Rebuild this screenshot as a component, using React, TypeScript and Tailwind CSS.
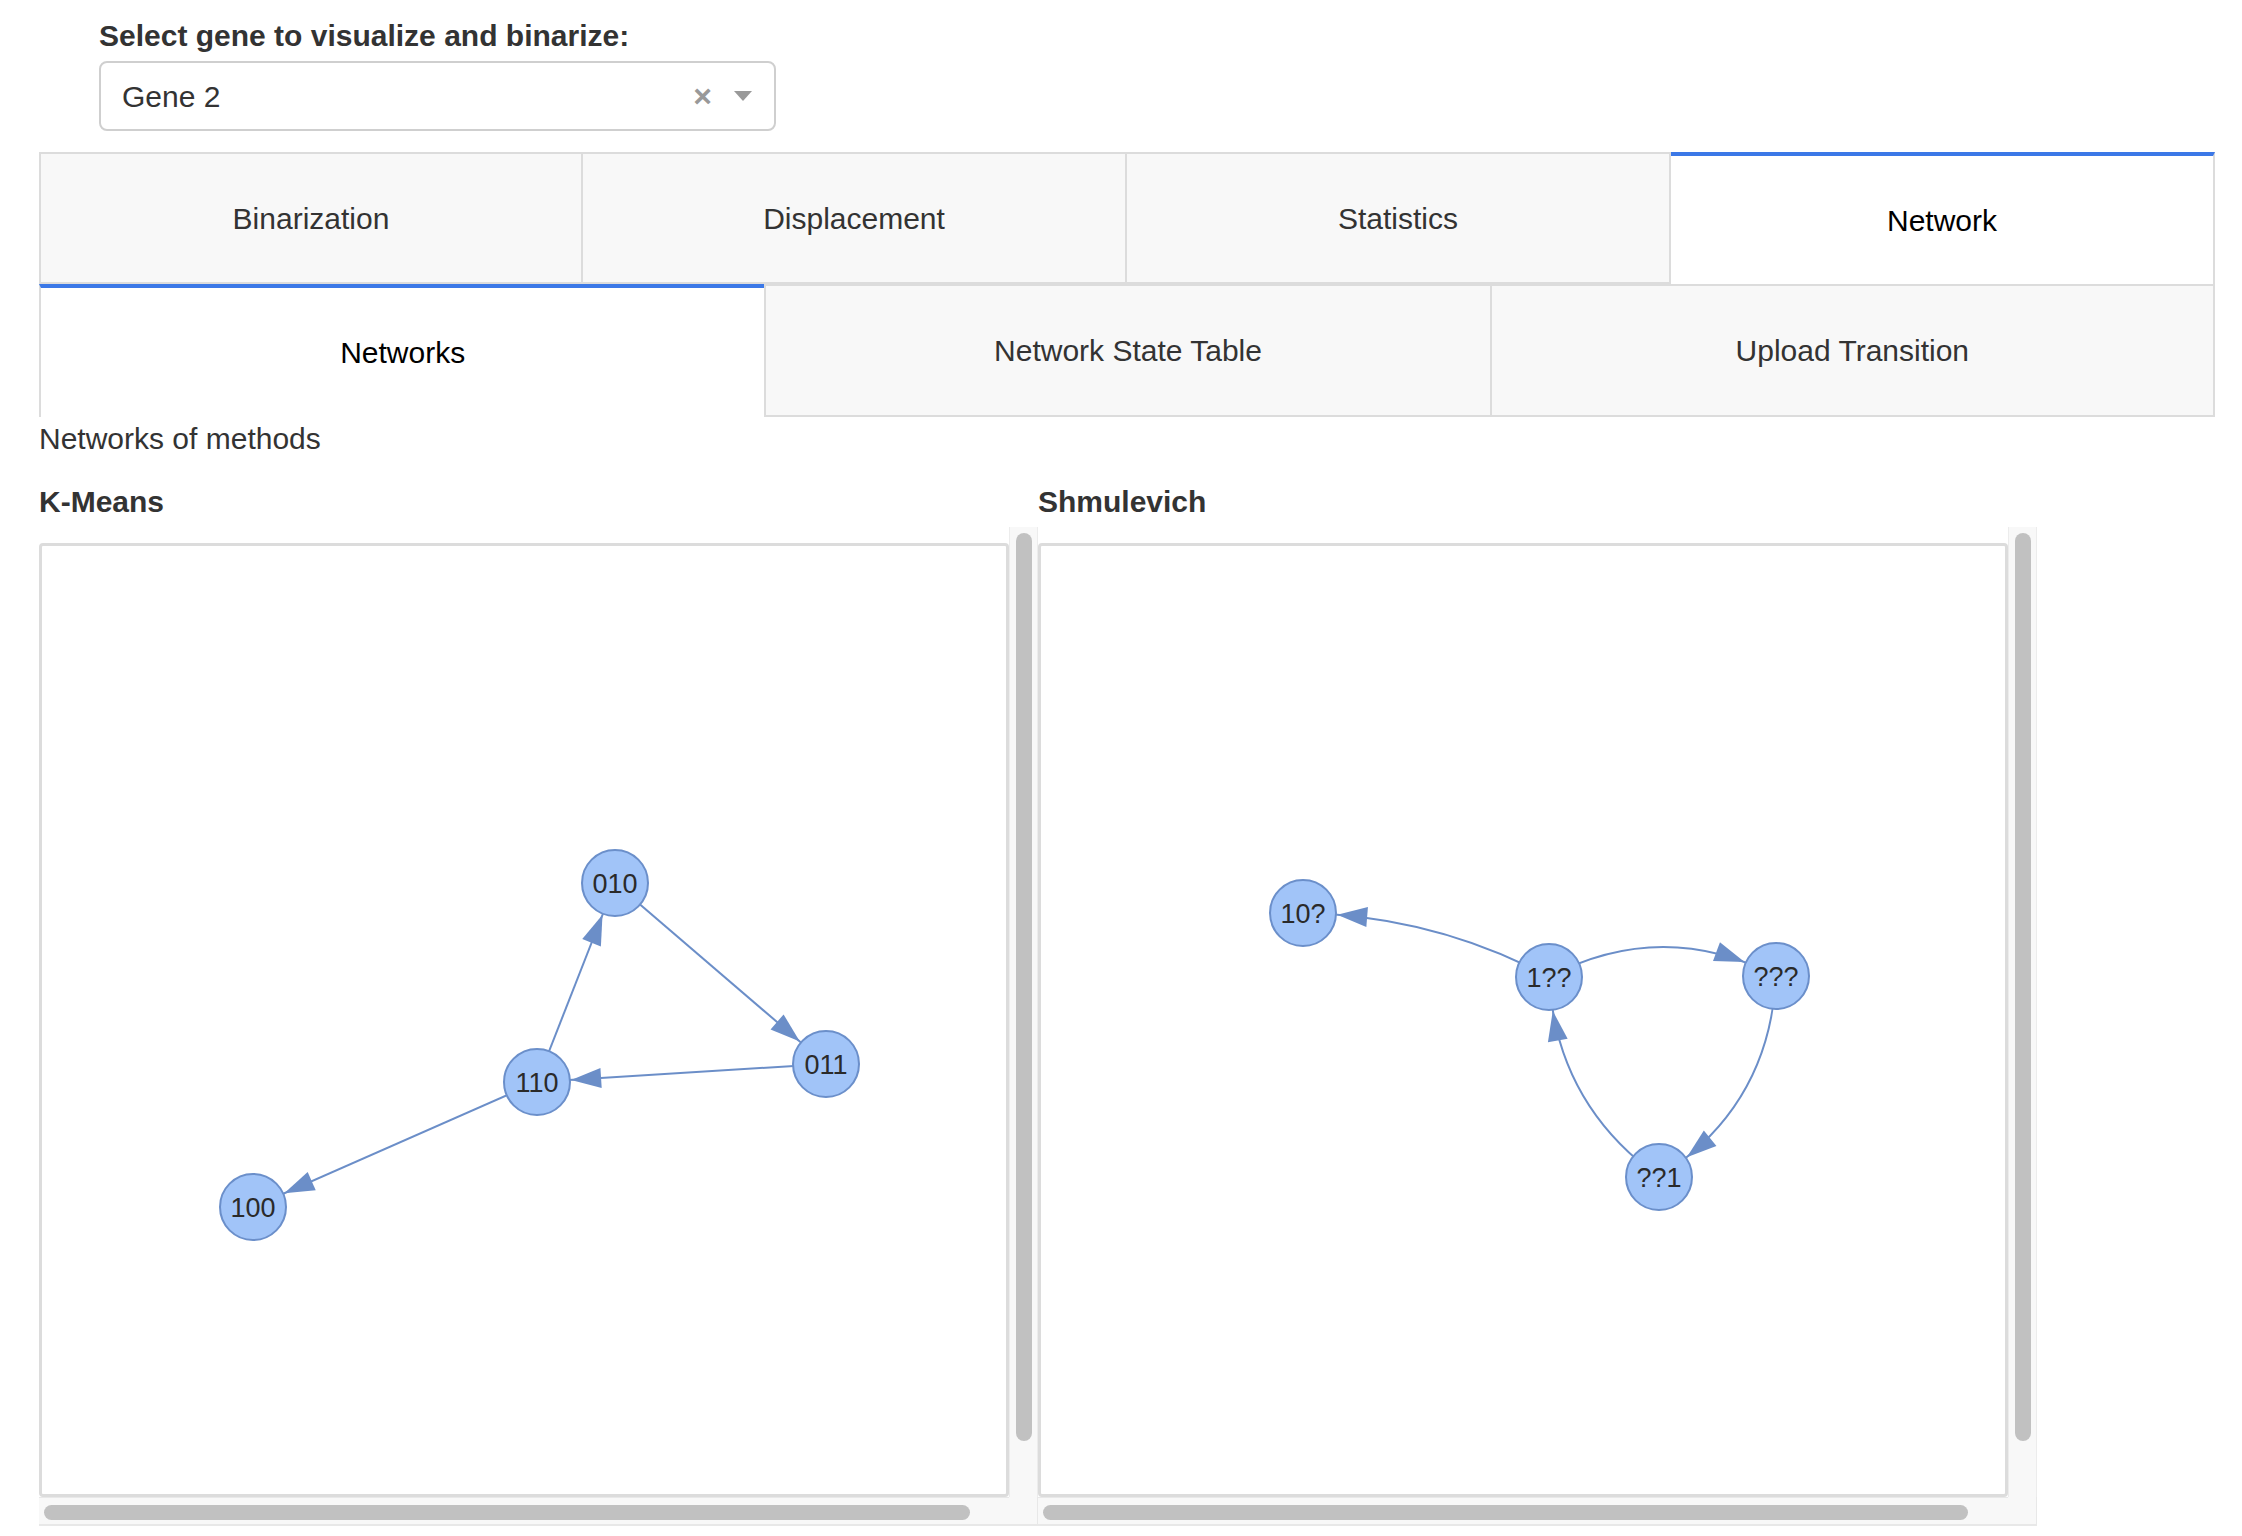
import React from 'react';

type GraphNode = { id: string; x: number; y: number };
type GraphEdge = { from: string; to: string; k: number };

const R = 33;
const EDGE = '#6b8ec8';

const kmeansNodes: GraphNode[] = [
  { id: '010', x: 615, y: 883 },
  { id: '011', x: 826, y: 1064 },
  { id: '110', x: 537, y: 1082 },
  { id: '100', x: 253, y: 1207 },
];
const kmeansEdges: GraphEdge[] = [
  { from: '110', to: '010', k: 0 },
  { from: '010', to: '011', k: 0 },
  { from: '011', to: '110', k: 0 },
  { from: '110', to: '100', k: 0 },
];

const shmuNodes: GraphNode[] = [
  { id: '10?', x: 1303, y: 913 },
  { id: '1??', x: 1549, y: 977 },
  { id: '???', x: 1776, y: 976 },
  { id: '??1', x: 1659, y: 1177 },
];
const shmuEdges: GraphEdge[] = [
  { from: '1??', to: '10?', k: -0.12 },
  { from: '1??', to: '???', k: 0.26 },
  { from: '???', to: '??1', k: 0.26 },
  { from: '??1', to: '1??', k: 0.24 },
];

const Edge = ({ a, b, k }: { a: GraphNode; b: GraphNode; k: number }) => {
  const dx = b.x - a.x;
  const dy = b.y - a.y;
  const c = { x: (a.x + b.x) / 2 + k * dy, y: (a.y + b.y) / 2 - k * dx };
  const bez = (t: number) => ({
    x: (1 - t) * (1 - t) * a.x + 2 * (1 - t) * t * c.x + t * t * b.x,
    y: (1 - t) * (1 - t) * a.y + 2 * (1 - t) * t * c.y + t * t * b.y,
  });
  let t = 1;
  while (t > 0) {
    const p = bez(t);
    if (Math.hypot(p.x - b.x, p.y - b.y) >= R + 1) break;
    t -= 0.002;
  }
  const tip = bez(t);
  const tx = 2 * (1 - t) * (c.x - a.x) + 2 * t * (b.x - c.x);
  const ty = 2 * (1 - t) * (c.y - a.y) + 2 * t * (b.y - c.y);
  const len = Math.hypot(tx, ty);
  const ux = tx / len;
  const uy = ty / len;
  const bx = tip.x - ux * 30;
  const by = tip.y - uy * 30;
  const wing = 10;
  return (
    <g>
      <path d={`M ${a.x} ${a.y} Q ${c.x} ${c.y} ${b.x} ${b.y}`} stroke={EDGE} strokeWidth={2} fill="none" />
      <polygon
        points={`${tip.x},${tip.y} ${bx - uy * wing},${by + ux * wing} ${bx + uy * wing},${by - ux * wing}`}
        fill={EDGE}
      />
    </g>
  );
};

const Graph = ({ nodes, edges, x0 }: { nodes: GraphNode[]; edges: GraphEdge[]; x0: number }) => {
  const byId = Object.fromEntries(nodes.map((n) => [n.id, n]));
  return (
    <svg width={964} height={948} viewBox={`${x0} 546 964 948`} className="block">
      {edges.map((e) => (
        <Edge key={e.from + e.to} a={byId[e.from]} b={byId[e.to]} k={e.k} />
      ))}
      {nodes.map((n) => (
        <g key={n.id}>
          <circle cx={n.x} cy={n.y} r={R} fill="#a1c4f8" stroke="#6b8fca" strokeWidth={2} />
          <text
            x={n.x}
            y={n.y + 1}
            textAnchor="middle"
            dominantBaseline="central"
            fontSize={27}
            fill="#2a2a2a"
            fontFamily="'Liberation Sans', Arial, sans-serif"
          >
            {n.id}
          </text>
        </g>
      ))}
    </svg>
  );
};

const GraphPanel = ({ nodes, edges, x0, thumbW }: { nodes: GraphNode[]; edges: GraphEdge[]; x0: number; thumbW: string }) => (
  <div className="w-[999px] h-[999px] grid grid-cols-[970px_29px] grid-rows-[970px_29px] bg-white">
    <div className="pt-[16px] overflow-hidden">
      <div className="w-[970px] h-[954px] border-[3px] border-[#dcdcdc] rounded-[4px] bg-white overflow-hidden">
        <Graph nodes={nodes} edges={edges} x0={x0} />
      </div>
    </div>
    <div className="bg-[#f8f8f8] border-x border-[#ececec] flex justify-center pt-[6px]">
      <div className="w-[16px] h-[908px] rounded-full bg-[#c1c1c1]" />
    </div>
    <div className="bg-[#f8f8f8] border-t border-b-2 border-[#e8e8e8] pl-[5px] pt-[7px]">
      <div className={`${thumbW} h-[15px] rounded-full bg-[#c1c1c1]`} />
    </div>
    <div className="bg-[#f8f8f8] border-b-2 border-r border-[#e8e8e8]" />
  </div>
);

const mainTabs = ['Binarization', 'Displacement', 'Statistics', 'Network'];
const subTabs = ['Networks', 'Network State Table', 'Upload Transition'];

export default function App() {
  return (
    <div className="w-[2242px] h-[1536px] overflow-hidden bg-white pl-[39px] pr-[27px] text-[#333] font-['Liberation_Sans',Arial,sans-serif] text-[30px]">
      <div className="pl-[60px] pt-[14px]">
        <div className="font-bold leading-[43px]">Select gene to visualize and binarize:</div>
        <div className="mt-[4px] w-[677px] h-[70px] border-2 border-[#cfcfcf] rounded-[8px] flex items-center pl-[21px] pr-[22px]">
          <span className="flex-1">Gene 2</span>
          <span className="text-[#999] text-[32px] font-bold leading-none mr-[22px]">×</span>
          <svg width="18" height="10" viewBox="0 0 18 10">
            <polygon points="0,0 18,0 9,10" fill="#999" />
          </svg>
        </div>
      </div>

      <div className="mt-[21px] grid grid-cols-4 h-[132px]">
        {mainTabs.map((t, i) =>
          i === 3 ? (
            <div key={t} className="flex items-center justify-center bg-white border-t-4 border-[#3b78e7] border-r-2 border-r-[#dcdcdc] text-black">
              {t}
            </div>
          ) : (
            <div
              key={t}
              className={`flex items-center justify-center bg-[#f8f8f8] border-y-2 border-r-2 border-[#dcdcdc] ${i === 0 ? 'border-l-2' : ''}`}
            >
              {t}
            </div>
          )
        )}
      </div>
      <div className="grid grid-cols-3 h-[133px]">
        {subTabs.map((t, i) =>
          i === 0 ? (
            <div key={t} className="flex items-center justify-center bg-white border-t-4 border-[#3b78e7] border-l-2 border-l-[#dcdcdc] text-black">
              {t}
            </div>
          ) : (
            <div
              key={t}
              className={`flex items-center justify-center bg-[#f8f8f8] border-y-2 border-l-2 border-[#dcdcdc] ${i === 2 ? 'border-r-2' : ''}`}
            >
              {t}
            </div>
          )
        )}
      </div>

      <div className="leading-[43px]">Networks of methods</div>

      <div className="mt-[20px] flex">
        <div className="w-[999px] font-bold leading-[43px]">K-Means</div>
        <div className="w-[999px] font-bold leading-[43px]">Shmulevich</div>
      </div>

      <div className="mt-[4px] flex">
        <GraphPanel nodes={kmeansNodes} edges={kmeansEdges} x0={42} thumbW="w-[926px]" />
        <GraphPanel nodes={shmuNodes} edges={shmuEdges} x0={1041} thumbW="w-[925px]" />
      </div>
    </div>
  );
}
